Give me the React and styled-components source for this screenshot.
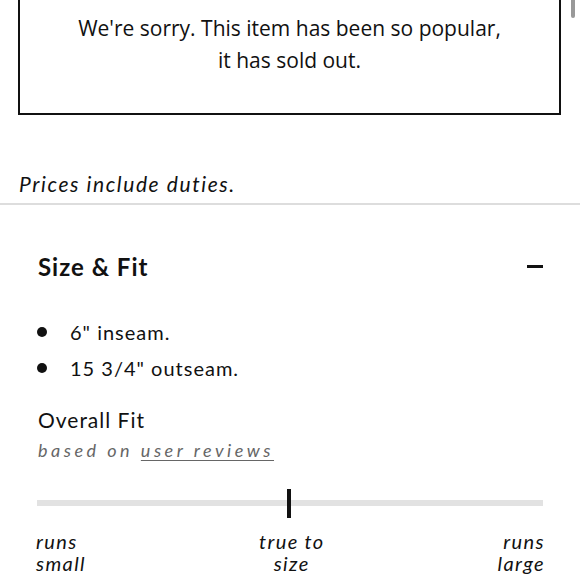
import styled, { createGlobalStyle } from 'styled-components';

const GlobalStyle = createGlobalStyle`
    html, body {
        margin: 0;
        padding: 0;
        background: #fff;
        overflow: hidden;
    }
    body {
        font-family: Lato, "Noto Sans", sans-serif;
        color: #111;
    }
`
const Page = styled.div `
    width: 580px;
    height: 580px;
    position: relative;
    overflow: hidden;
`
const ScrollThumb = styled.div `
    position: absolute;
    top: 0;
    right: 5px;
    width: 4px;
    height: 18px;
    border-radius: 0 0 2px 2px;
    background: #999;
`
const SoldOutBox = styled.div `
    margin: -20px 19px 0 18px;
    height: 135px;
    box-sizing: border-box;
    border: 2px solid #111;
    border-top: none;
    display: flex;
    flex-direction: column;
    align-items: center;
    padding-top: 32px;
    font-family: "Open Sans", "Noto Sans", sans-serif;
    font-size: 21px;
    line-height: 32px;
    color: #111;
    text-align: center;
`
const Duties = styled.p `
    margin: 57px 0 0 19px;
    font-style: italic;
    font-size: 21px;
    letter-spacing: 1.6px;
    line-height: 24px;
`
const Divider = styled.hr `
    margin: 7px 0 0;
    border: none;
    border-top: 2px solid #ddd;
`
const Section = styled.section `
    padding: 0 37px 0 38px;
`
const SectionHeader = styled.div `
    display: flex;
    justify-content: space-between;
    align-items: center;
    margin-top: 46px;
    height: 30px;
`
const Title = styled.h2 `
    margin: 0;
    font-size: 24px;
    font-weight: 700;
    letter-spacing: 1px;
`
const Minus = styled.span `
    width: 16px;
    height: 3px;
    background: #111;
`
const List = styled.ul `
    list-style: none;
    margin: 39px 0 0;
    padding: 0;
    display: flex;
    flex-direction: column;
    gap: 12px;
`
const Item = styled.li `
    display: flex;
    align-items: center;
    font-size: 20px;
    letter-spacing: 1px;
    line-height: 24px;
    &::before {
        content: '';
        width: 10px;
        height: 10px;
        border-radius: 50%;
        background: #111;
        margin: 0 23px 0 -1px;
    }
`
const FitTitle = styled.div `
    margin-top: 28px;
    font-size: 21px;
    letter-spacing: 1px;
    line-height: 24px;
`
const FitSub = styled.div `
    margin-top: 7px;
    font-size: 18px;
    font-style: italic;
    letter-spacing: 3.5px;
    color: #666;
    line-height: 22px;
    a {
        color: #666;
        text-decoration: underline;
        text-underline-offset: 3px;
    }
`
const Track = styled.div `
    position: relative;
    margin: 39px 0 0 -1px;
    height: 6px;
    background: #e2e2e2;
`
const Marker = styled.span `
    position: absolute;
    top: -11px;
    left: calc(50% - 3px);
    width: 4px;
    height: 29px;
    background: #111;
`
const Labels = styled.div `
    display: flex;
    justify-content: space-between;
    margin: 24px -2px 0 -2px;
`
const Label = styled.div `
    font-size: 20px;
    font-style: italic;
    letter-spacing: 1.4px;
    line-height: 22px;
    text-align: ${props => props.align || 'left'};
`

const App = () => {
    return (
        <>
        <GlobalStyle />
        <Page>
            <ScrollThumb />
            <SoldOutBox>
                <div>We're sorry. This item has been so popular,</div>
                <div>it has sold out.</div>
            </SoldOutBox>
            <Duties>Prices include duties.</Duties>
            <Divider />
            <Section>
                <SectionHeader>
                    <Title>Size &amp; Fit</Title>
                    <Minus />
                </SectionHeader>
                <List>
                    <Item>6" inseam.</Item>
                    <Item>15 3/4" outseam.</Item>
                </List>
                <FitTitle>Overall Fit</FitTitle>
                <FitSub>based on <a href="#">user reviews</a></FitSub>
                <Track>
                    <Marker />
                </Track>
                <Labels>
                    <Label>runs<br />small</Label>
                    <Label align="center">true to<br />size</Label>
                    <Label align="right">runs<br />large</Label>
                </Labels>
            </Section>
        </Page>
        </>
    )
}

export default App;
